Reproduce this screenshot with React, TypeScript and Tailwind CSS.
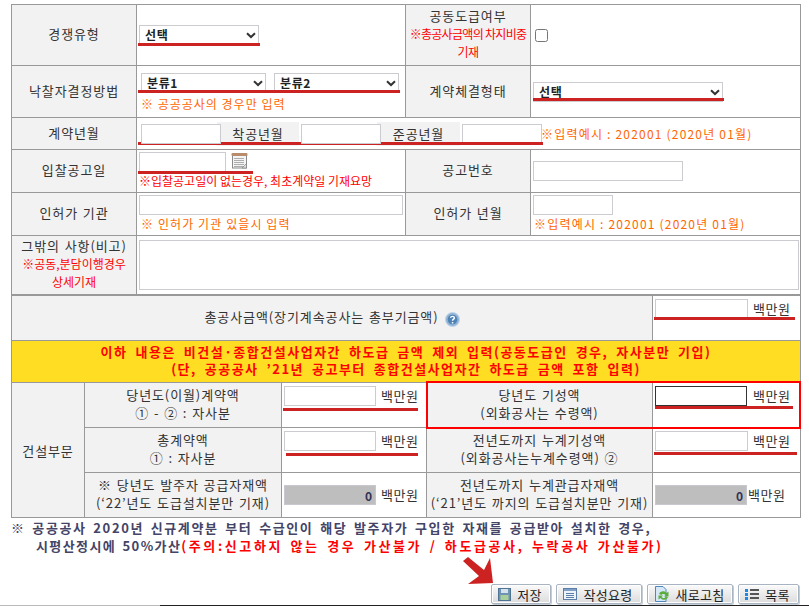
import type { ReactNode } from "react";

const ORANGE = "text-[#ff6600]";

const Label = ({ children, className = "" }: { children: ReactNode; className?: string }) => (
  <div className={`flex flex-col items-center justify-center text-center whitespace-nowrap bg-[#f2f2f2] border-r border-[#999] pb-[2px] leading-[18px] tracking-[0.9px] [word-spacing:1px] ${className}`}>
    {children}
  </div>
);

const TextInput = ({ className = "" }: { className?: string }) => (
  <input type="text" className={`block h-[20px] bg-white border border-[#ccccd0] outline-none shrink-0 ${className}`} />
);

const Chevron = () => (
  <svg width="10" height="7" viewBox="0 0 10 7" className="absolute right-[3px] top-[7px]">
    <path d="M1 1.2 L5 5 L9 1.2" fill="none" stroke="#333" strokeWidth="2" />
  </svg>
);

const Select = ({ label, className = "" }: { label: string; className?: string }) => (
  <div className={`relative shrink-0 ${className}`}>
    <select className="block w-full h-[20px] pl-[5px] appearance-none bg-white border border-[#ccccd0] font-bold text-[12px] tracking-[0.6px] text-[#222] leading-[18px] outline-none">
      <option>{label}</option>
    </select>
    <Chevron />
  </div>
);

const Won = ({ className = "ml-[5px]" }: { className?: string }) => (
  <span className={`whitespace-nowrap tracking-[0.5px] ${className}`}>백만원</span>
);

const GrayAmount = () => (
  <input
    type="text"
    readOnly
    value="0"
    className="block w-[92px] h-[20px] pr-[3px] text-right font-bold text-[12px] text-[#333355] bg-[#bebebe] border border-[#c8c8d0] outline-none shrink-0"
  />
);

const Calendar = () => (
  <svg width="17" height="16" viewBox="0 0 17 16" className="ml-[5px] mt-[1px]">
    <rect x="1.5" y="2" width="14" height="13" fill="#f4f4f4" stroke="#8a8a8a" />
    <rect x="0.5" y="0" width="16" height="3" rx="1" fill="#b98d6b" />
    {[5, 7, 9, 11, 13].map((y) => (
      <path key={y} d={`M3.5 ${y + 0.5}H13.5`} stroke="#666" strokeDasharray="1 1" />
    ))}
    <path d="M11 15 L15.5 10.5 V15 Z" fill="#ddd" stroke="#777" strokeWidth="0.6" />
  </svg>
);

const Help = () => (
  <svg width="15" height="15" viewBox="0 0 15 15" className="ml-[6px] mt-[5px]">
    <circle cx="7.5" cy="7.5" r="7" fill="#8fb3d6" stroke="#c2d5e8" />
    <circle cx="7.5" cy="7.5" r="4.8" fill="#4f82b5" />
    <path d="M5.6 5.8 C5.8 3.9 9.4 3.9 9.4 5.9 C9.4 7.2 7.5 7.2 7.5 8.8" fill="none" stroke="#fff" strokeWidth="1.4" />
    <rect x="6.8" y="10" width="1.5" height="1.5" fill="#fff" />
  </svg>
);

const Mark = ({ className }: { className: string }) => <div className={`absolute h-[3px] bg-[#cc2222] ${className}`} />;

const FooterButton = ({ icon, label, className }: { icon: ReactNode; label: string; className: string }) => (
  <button className={`flex items-center h-[20px] pl-[6px] border border-[#a9b4c2] rounded-[2px] bg-gradient-to-b from-[#fafafa] to-[#dcdcdc] text-[#222] text-[13px] tracking-[0.3px] leading-none shadow-[inset_0_0_0_1px_#fff,1px_1px_0_#c4ccd6] ${className}`}>
    {icon}
    <span className="flex-1 text-center pr-[2px]">{label}</span>
  </button>
);

const SaveIcon = () => (
  <svg width="13" height="13" viewBox="0 0 13 13">
    <rect x="0.5" y="0.5" width="12" height="12" fill="#6f93b3" stroke="#4f7394" />
    <rect x="3" y="1" width="7" height="4" fill="#d7e3ec" />
    <rect x="2.5" y="7" width="8" height="5" fill="#a9cf9a" />
  </svg>
);

const GuideIcon = () => (
  <svg width="14" height="12" viewBox="0 0 14 12">
    <rect x="0.5" y="0.5" width="13" height="11" fill="#eef3f9" stroke="#5c7fa8" />
    <rect x="1" y="1" width="12" height="2" fill="#7f9fc6" />
    {[5, 7, 9].map((y) => (
      <path key={y} d={`M3 ${y + 0.5}H11`} stroke="#5c7fa8" />
    ))}
  </svg>
);

const RefreshIcon = () => (
  <svg width="16" height="16" viewBox="0 0 16 16">
    <path d="M1.5 .5 H9 L12 3.5 V15.5 H1.5 Z" fill="#d6e7f5" stroke="#4e86bd" />
    <path d="M5 8 C6 4.5 11 4.5 12.5 7 L14.5 5.5 V10.5 H10 L11.5 9 C10.5 7.5 8 7.5 7.5 9 Z" fill="#5cae3a" />
    <path d="M14 11 C13 14.5 8 14.5 6.5 12 L4.5 13.5 V9.5 H9 L7.5 11 C8.5 12.5 11 12.5 11.5 11 Z" fill="#5cae3a" />
  </svg>
);

const ListIcon = () => (
  <svg width="14" height="11" viewBox="0 0 14 11">
    {[0, 4, 8].map((y) => (
      <g key={y}>
        <rect x="0" y={y} width="3" height="3" fill="#1e88e5" />
        <rect x="5" y={y} width="9" height="2" fill="#555" />
      </g>
    ))}
  </svg>
);

export default function App() {
  return (
    <div
      className="relative w-[809px] h-[606px] overflow-hidden bg-white pl-[11px] pt-[4px] text-[13px] text-[#333]"
      style={{ fontFamily: '"Noto Sans CJK KR", sans-serif' }}
    >
      <div className="w-[790px] border-t border-x border-[#999]">
        <div className="flex h-[61px] border-b border-[#999]">
          <Label className="w-[125px]">경쟁유형</Label>
          <div className="w-[269px] border-r border-[#999] pl-[2px] pt-[20px]">
            <Select label="선택" className="w-[120px]" />
          </div>
          <Label className="w-[125px]">
            <span>공동도급여부</span>
            <span className="text-[#ff0000] text-[12px] tracking-[-0.7px] [word-spacing:0]">※총공사금액의 차지비중</span>
            <span className="text-[#ff0000] text-[12px] tracking-[-0.6px]">기재</span>
          </Label>
          <div className="flex-1 flex items-center pl-[4px]">
            <input type="checkbox" className="w-[13px] h-[13px] m-0" />
          </div>
        </div>

        <div className="flex h-[52px] border-b border-[#999]">
          <Label className="w-[125px]">낙찰자결정방법</Label>
          <div className="w-[269px] border-r border-[#999] pl-[4px] pt-[7px]">
            <div className="flex gap-[8px]">
              <Select label="분류1" className="w-[125px]" />
              <Select label="분류2" className="w-[125px]" />
            </div>
            <p className={`mt-[2px] text-[12px] leading-[18px] tracking-[1px] ${ORANGE}`}>※ 공공공사의 경우만 입력</p>
          </div>
          <Label className="w-[125px]">계약체결형태</Label>
          <div className="flex-1 pl-[2px] pt-[16px]">
            <Select label="선택" className="w-[190px]" />
          </div>
        </div>

        <div className="flex h-[32px] border-b border-[#999]">
          <Label className="w-[125px]">계약년월</Label>
          <div className="flex-1 flex items-start pl-[4px] pt-[6px]">
            <TextInput className="w-[80px] relative z-10" />
            <div className="-ml-[4px] -mt-[2px] pb-[1px] w-[82px] h-[24px] bg-[#f2f2f2] tracking-[0.9px] flex items-center justify-center">착공년월</div>
            <TextInput className="ml-[2px] w-[80px] relative z-10" />
            <div className="-ml-[4px] -mt-[2px] pb-[1px] w-[83px] h-[24px] bg-[#f2f2f2] tracking-[0.9px] flex items-center justify-center">준공년월</div>
            <TextInput className="ml-[2px] w-[80px]" />
            <span className={`-ml-[1px] text-[12px] leading-[20px] tracking-[1.2px] whitespace-nowrap ${ORANGE}`}>※입력예시 : 202001 (2020년 01월)</span>
          </div>
        </div>

        <div className="flex h-[43px] border-b border-[#999]">
          <Label className="w-[125px]">입찰공고일</Label>
          <div className="w-[269px] border-r border-[#999] pl-[2px] pt-[2px]">
            <div className="flex items-start">
              <TextInput className="w-[87px]" />
              <Calendar />
            </div>
            <p className="text-[#ff0000] text-[12px] leading-[18px] whitespace-nowrap">※입찰공고일이 없는경우, 최초계약일 기재요망</p>
          </div>
          <Label className="w-[125px]">공고번호</Label>
          <div className="flex-1 flex items-center pl-[2px]">
            <TextInput className="w-[150px]" />
          </div>
        </div>

        <div className="flex h-[43px] border-b border-[#999]">
          <Label className="w-[125px]">인허가 기관</Label>
          <div className="w-[269px] border-r border-[#999] pl-[2px] pt-[2px]">
            <TextInput className="w-[264px]" />
            <p className={`pl-[2px] text-[12px] leading-[18px] tracking-[1.1px] ${ORANGE}`}>※ 인허가 기관 있을시 입력</p>
          </div>
          <Label className="w-[125px]">인허가 년월</Label>
          <div className="flex-1 pl-[2px] pt-[2px]">
            <TextInput className="w-[80px]" />
            <p className={`pl-[1px] text-[12px] leading-[18px] tracking-[1.2px] whitespace-nowrap ${ORANGE}`}>※입력예시 : 202001 (2020년 01월)</p>
          </div>
        </div>

        <div className="flex h-[59px] border-b border-[#999]">
          <Label className="w-[125px]">
            <span>그밖의 사항(비고)</span>
            <span className="text-[#ff0000] text-[12px] tracking-[0px]">※공동,분담이행경우</span>
            <span className="text-[#ff0000] text-[12px] tracking-[0px]">상세기재</span>
          </Label>
          <div className="flex-1 pl-[2px] pt-[4px]">
            <textarea className="block w-[660px] h-[50px] bg-white border border-[#ccccd0] outline-none resize-none" />
          </div>
        </div>

        <div className="flex h-[46px] border-t border-b border-[#999]">
          <Label className="w-[641px] !flex-row">
            총공사금액(장기계속공사는 총부기금액)
            <Help />
          </Label>
          <div className="flex-1 flex items-start pl-[2px] pt-[3px]">
            <TextInput className="w-[93px]" />
            <Won />
          </div>
        </div>

        <div className="h-[42px] pb-[4px] border-b border-[#999] bg-[#ffdd22] flex flex-col items-center justify-center text-[#ff0000] font-bold leading-[17px] tracking-[1.5px] [word-spacing:3.5px] whitespace-nowrap">
          <p>이하 내용은 비건설·종합건설사업자간 하도급 금액 제외 입력(공동도급인 경우, 자사분만 기입)</p>
          <p>(단, 공공공사 ’21년 공고부터 종합건설사업자간 하도급 금액 포함 입력)</p>
        </div>

        <div className="flex h-[135px] border-b border-[#999]">
          <Label className="w-[73px] !pb-0 pt-[2px]">건설부문</Label>
          <div className="flex-1 flex flex-col">
            <div className="flex h-[45px] border-b border-[#999]">
              <Label className="w-[197px]">
                <span>당년도(이월)계약액</span>
                <span>① - ② : 자사분</span>
              </Label>
              <div className="w-[145px] border-r border-transparent flex items-start pl-[2px] pt-[3px]">
                <TextInput className="w-[92px]" />
                <Won />
              </div>
              <Label className="w-[226px]">
                <span>당년도 기성액</span>
                <span>(외화공사는 수령액)</span>
              </Label>
              <div className="flex-1 flex items-start pl-[2px] pt-[3px]">
                <TextInput className="w-[92px] !border-[#333]" />
                <Won className="ml-[6px]" />
              </div>
            </div>
            <div className="flex h-[45px] border-b border-[#999]">
              <Label className="w-[197px]">
                <span>총계약액</span>
                <span>① : 자사분</span>
              </Label>
              <div className="w-[145px] border-r border-[#999] flex items-start pl-[2px] pt-[3px]">
                <TextInput className="w-[92px]" />
                <Won />
              </div>
              <Label className="w-[226px]">
                <span>전년도까지 누계기성액</span>
                <span>(외화공사는누계수령액) ②</span>
              </Label>
              <div className="flex-1 flex items-start pl-[2px] pt-[3px]">
                <TextInput className="w-[93px]" />
                <Won />
              </div>
            </div>
            <div className="flex h-[44px]">
              <Label className="w-[197px]">
                <span>※ 당년도 발주자 공급자재액</span>
                <span>(‘22’년도 도급설치분만 기재)</span>
              </Label>
              <div className="w-[145px] border-r border-[#999] flex items-center pl-[2px]">
                <GrayAmount />
                <Won />
              </div>
              <Label className="w-[226px]">
                <span>전년도까지 누계관급자재액</span>
                <span>(‘21’년도 까지의 도급설치분만 기재)</span>
              </Label>
              <div className="flex-1 flex items-center pl-[2px]">
                <GrayAmount />
                <Won className="ml-[1px]" />
              </div>
            </div>
          </div>
        </div>
      </div>

      <div className="pt-[1px] font-bold text-[13px] leading-[18px] text-[#444466] whitespace-nowrap">
        <p className="tracking-[1.6px] [word-spacing:2.2px]">※ 공공공사 2020년 신규계약분 부터 수급인이 해당 발주자가 구입한 자재를 공급받아 설치한 경우,</p>
        <p className="pl-[25px] tracking-[1.4px] [word-spacing:2px]">
          시평산정시에 50%가산<span className="text-[#ff0000] tracking-[2.6px]">(주의:신고하지 않는 경우 가산불가 / 하도급공사, 누락공사 가산불가)</span>
        </p>
      </div>

      <div className="absolute left-[491px] top-[584px] flex gap-[5px]">
        <FooterButton icon={<SaveIcon />} label="저장" className="w-[60px]" />
        <FooterButton icon={<GuideIcon />} label="작성요령" className="w-[86px]" />
        <FooterButton icon={<RefreshIcon />} label="새로고침" className="w-[86px]" />
        <FooterButton icon={<ListIcon />} label="목록" className="w-[61px]" />
      </div>

      {/* red annotation strokes drawn over the form */}
      <Mark className="left-[138px] top-[43px] w-[122px]" />
      <Mark className="left-[138px] top-[90px] w-[262px]" />
      <Mark className="left-[533px] top-[98px] w-[191px]" />
      <Mark className="left-[138px] top-[142px] w-[405px]" />
      <Mark className="left-[138px] top-[171px] w-[115px]" />
      <Mark className="left-[654px] top-[317px] w-[141px]" />
      <Mark className="left-[283px] top-[408px] w-[135px]" />
      <Mark className="left-[655px] top-[406px] w-[138px]" />
      <Mark className="left-[286px] top-[453px] w-[132px]" />
      <Mark className="left-[654px] top-[452px] w-[143px]" />
      <div className="absolute left-[426px] top-[381px] w-[375px] h-[48px] border-[2px] border-[#ff0000]" />
      <svg width="32" height="30" viewBox="0 0 32 30" className="absolute left-[462px] top-[557px]">
        <path d="M1 4 L6 0 L22 13 L28 1 L31 26 L6 27 L17 19 Z" fill="#cc2222" />
      </svg>
      <div className="absolute left-0 bottom-0 w-[160px] h-px bg-[#bbb]" />
      <div className="absolute left-[160px] bottom-0 w-[649px] h-px bg-[#222]" />
    </div>
  );
}
